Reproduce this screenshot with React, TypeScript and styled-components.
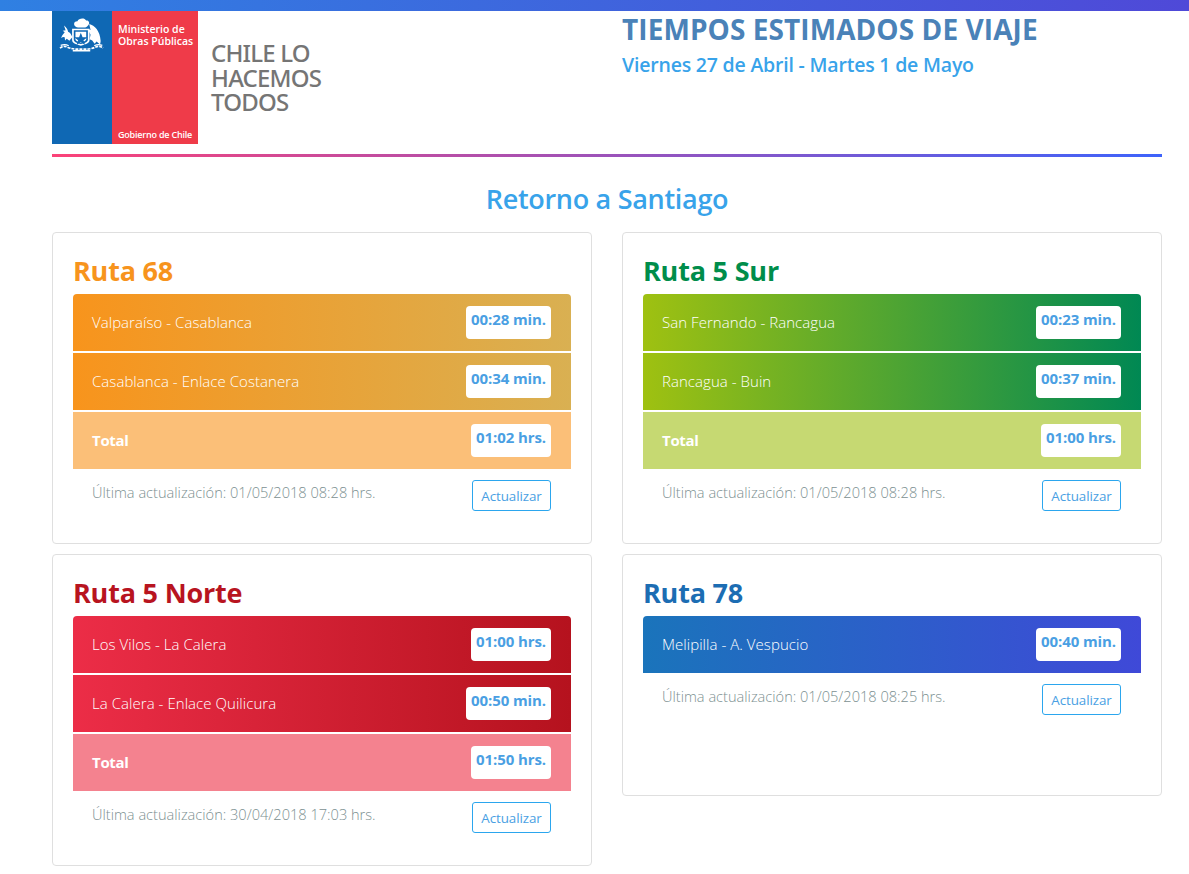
import React from "react";
import styled, { createGlobalStyle } from "styled-components";

const GlobalStyle = createGlobalStyle`
  * { box-sizing: border-box; }
  body {
    margin: 0;
    background: #fff;
    font-family: "Open Sans", "Noto Sans", sans-serif;
  }
`;

const TopBar = styled.div`
  height: 11px;
  background: linear-gradient(90deg, #2f80e2 0%, #4f49d8 100%);
`;

const Page = styled.div`
  width: 1110px;
  margin-left: 52px;
`;

const Header = styled.header`
  display: grid;
  grid-template-columns: 540px 540px;
  column-gap: 30px;
  height: 146px;
  border-bottom: 3px solid transparent;
  border-image: linear-gradient(90deg, #fb4278 0%, #3d63fb 100%) 1;
`;

const LogoArea = styled.div`
  display: flex;
  align-items: flex-start;
  height: 133px;
`;

const Flag = styled.div`
  display: flex;
  width: 146px;
  height: 133px;
`;

const FlagBlue = styled.div`
  width: 60px;
  background: #0f68b4;
  padding: 6px 0 0 6px;
`;

const FlagRed = styled.div`
  flex: 1;
  display: flex;
  flex-direction: column;
  justify-content: space-between;
  background: #ef3b49;
  color: #fff;
  padding: 12px 0 3px 6px;
  font-size: 10.5px;
  font-weight: 600;
  line-height: 12px;
  letter-spacing: 0;
  white-space: nowrap;
`;

const FlagFoot = styled.span`
  font-size: 9px;
  letter-spacing: -0.2px;
`;

const Slogan = styled.div`
  margin: 30px 0 0 13px;
  color: #757575;
  font-family: "Noto Sans", sans-serif;
  font-size: 24px;
  font-weight: 500;
  line-height: 24.5px;
  letter-spacing: -0.8px;
`;

const TitleArea = styled.div`
  padding-top: 1px;
`;

const MainTitle = styled.h1`
  margin: 0;
  color: #4a82b8;
  font-size: 28px;
  font-weight: 700;
  line-height: 34px;
  letter-spacing: 0.08px;
  white-space: nowrap;
`;

const SubTitle = styled.h2`
  margin: 5px 0 0;
  color: #38a3ea;
  font-size: 19.5px;
  font-weight: 600;
  line-height: 28px;
  letter-spacing: -0.2px;
  white-space: nowrap;
`;

const Section = styled.h3`
  margin: 24px 0 15px;
  color: #38a3ea;
  font-size: 27px;
  font-weight: 600;
  line-height: 36px;
  text-align: center;
  letter-spacing: -0.3px;
`;

const Columns = styled.div`
  display: grid;
  grid-template-columns: 540px 540px;
  column-gap: 30px;
  row-gap: 10px;
  align-items: start;
`;

const Card = styled.section<{ $minHeight?: number }>`
  border: 1px solid #dfdfdf;
  border-radius: 4px;
  padding: 15px 20px 32px;
  min-height: ${(p) => p.$minHeight ?? 0}px;
`;

const RouteName = styled.h4<{ $color: string }>`
  margin: 0;
  color: ${(p) => p.$color};
  font-size: 27px;
  font-weight: 700;
  line-height: 46px;
  letter-spacing: -0.2px;
`;

const Rows = styled.div`
  display: flex;
  flex-direction: column;
  gap: 2px;
  border-radius: 4px 4px 0 0;
  overflow: hidden;
`;

const Row = styled.div<{ $bg: string }>`
  display: flex;
  justify-content: space-between;
  height: 57px;
  padding: 12px 20px 0 19px;
  background: ${(p) => p.$bg};
  color: #fff;
`;

const Place = styled.span<{ $total?: boolean }>`
  font-size: 15px;
  font-weight: ${(p) => (p.$total ? 700 : 300)};
  line-height: 33px;
  letter-spacing: ${(p) => (p.$total ? "-0.3px" : "0.05px")};
`;

const Time = styled.span`
  height: 33px;
  padding: 2px 5px 0;
  background: #fff;
  border-radius: 4px;
  color: #4a9fe3;
  font-size: 15px;
  font-weight: 700;
  line-height: 22px;
  letter-spacing: -0.1px;
  white-space: nowrap;
`;

const Footer = styled.div`
  display: flex;
  justify-content: space-between;
  align-items: flex-start;
  padding: 11px 20px 0 19px;
`;

const Updated = styled.span`
  color: #7c9091;
  font-size: 14.6px;
  font-weight: 300;
  line-height: 25px;
`;

const UpdateButton = styled.button`
  width: 79px;
  height: 31px;
  padding: 0;
  background: #fff;
  border: 1px solid #2ba6ee;
  border-radius: 3px;
  color: #4a9fe3;
  font-family: inherit;
  font-size: 13.4px;
  font-weight: 400;
  letter-spacing: -0.1px;
`;

// coat of arms: plume, deer, shield with star, condor, ribbon
const Crest = () => (
  <svg width="47" height="35" viewBox="0 0 140 103" fill="#fff">
    <path d="M52 28c-8-7-3-17 6-16 3-9 21-12 26-2 8-1 12 8 6 14-3 5-8 7-11 7H60c-3 0-6-1-8-3z" />
    <path d="M43 60c-3-9-7-15-13-17-1-6-5-12-12-18 2 6 3 10 5 14l-9 1 6 5-7 9-4 8 6-3 5 1 1 9 5-5 8 6 4-5z" />
    <path d="M93 20c16 4 32 20 34 50 0 5-1 8-2 11l-10-9-6 7-7-10-8-3 3-14-7-14c3-1 5-1 7 0z" />
    <path d="M42 34h52v34c0 10-14 14-26 17-12-3-26-7-26-17z" />
    <path d="M47 39h42v28c0 7-11 10-21 13-10-3-21-6-21-13z" fill="#0f68b4" />
    <path d="M52 43h32v23c0 5-8 7-16 10-8-3-16-5-16-10z" />
    <path d="M68 46l5.200 14h14.800l-12 8.800 4.600 14.200-12.600-8.800-12.600 8.800 4.600-14.200-12-8.800h14.800z" fill="#0f68b4" />
    <path
      d="M6 92c8-7 16-6 24-2 8 3 16 5 24 5h32c8 0 16-2 24-5 8-4 16-5 24 2"
      fill="none"
      stroke="#fff"
      strokeWidth="5"
      strokeDasharray="9 3"
    />
    <path d="M8 84c8-3 16-3 24 1M132 84c-8-3-16-3-24 1M44 100h52" fill="none" stroke="#fff" strokeWidth="4" />
  </svg>
);

type Leg = { name: string; time: string };

type Route = {
  name: string;
  color: string;
  from: string;
  to: string;
  totalBg?: string;
  total?: string;
  legs: Leg[];
  updated: string;
  minHeight?: number;
};

const routes: Route[] = [
  {
    name: "Ruta 68",
    color: "#f7941d",
    from: "#f8941c",
    to: "#d9b052",
    totalBg: "#fbbf78",
    total: "01:02 hrs.",
    legs: [
      { name: "Valparaíso - Casablanca", time: "00:28 min." },
      { name: "Casablanca - Enlace Costanera", time: "00:34 min." },
    ],
    updated: "01/05/2018 08:28",
  },
  {
    name: "Ruta 5 Sur",
    color: "#008d4b",
    from: "#9fc111",
    to: "#008853",
    totalBg: "#c6d972",
    total: "01:00 hrs.",
    legs: [
      { name: "San Fernando - Rancagua", time: "00:23 min." },
      { name: "Rancagua - Buin", time: "00:37 min." },
    ],
    updated: "01/05/2018 08:28",
  },
  {
    name: "Ruta 5 Norte",
    color: "#b8141f",
    from: "#ec2d47",
    to: "#b5121e",
    totalBg: "#f4828f",
    total: "01:50 hrs.",
    legs: [
      { name: "Los Vilos - La Calera", time: "01:00 hrs." },
      { name: "La Calera - Enlace Quilicura", time: "00:50 min." },
    ],
    updated: "30/04/2018 17:03",
  },
  {
    name: "Ruta 78",
    color: "#1c6db3",
    from: "#1a74bb",
    to: "#3f49d8",
    legs: [{ name: "Melipilla - A. Vespucio", time: "00:40 min." }],
    updated: "01/05/2018 08:25",
    minHeight: 242,
  },
];

const App: React.FC = () => (
  <>
    <GlobalStyle />
    <TopBar />
    <Page>
      <Header>
        <LogoArea>
          <Flag>
            <FlagBlue>
              <Crest />
            </FlagBlue>
            <FlagRed>
              <span>
                Ministerio de
                <br />
                Obras Públicas
              </span>
              <FlagFoot>Gobierno de Chile</FlagFoot>
            </FlagRed>
          </Flag>
          <Slogan>
            CHILE LO
            <br />
            HACEMOS
            <br />
            TODOS
          </Slogan>
        </LogoArea>
        <TitleArea>
          <MainTitle>TIEMPOS ESTIMADOS DE VIAJE</MainTitle>
          <SubTitle>Viernes 27 de Abril - Martes 1 de Mayo</SubTitle>
        </TitleArea>
      </Header>
      <Section>Retorno a Santiago</Section>
      <Columns>
        {routes.map((route) => {
          const gradient = `linear-gradient(90deg, ${route.from} 0%, ${route.to} 100%)`;
          return (
            <Card key={route.name} $minHeight={route.minHeight}>
              <RouteName $color={route.color}>{route.name}</RouteName>
              <Rows>
                {route.legs.map((leg) => (
                  <Row key={leg.name} $bg={gradient}>
                    <Place>{leg.name}</Place>
                    <Time>{leg.time}</Time>
                  </Row>
                ))}
                {route.total && route.totalBg && (
                  <Row $bg={route.totalBg}>
                    <Place $total>Total</Place>
                    <Time>{route.total}</Time>
                  </Row>
                )}
              </Rows>
              <Footer>
                <Updated>Última actualización: {route.updated} hrs.</Updated>
                <UpdateButton>Actualizar</UpdateButton>
              </Footer>
            </Card>
          );
        })}
      </Columns>
    </Page>
  </>
);

export default App;
